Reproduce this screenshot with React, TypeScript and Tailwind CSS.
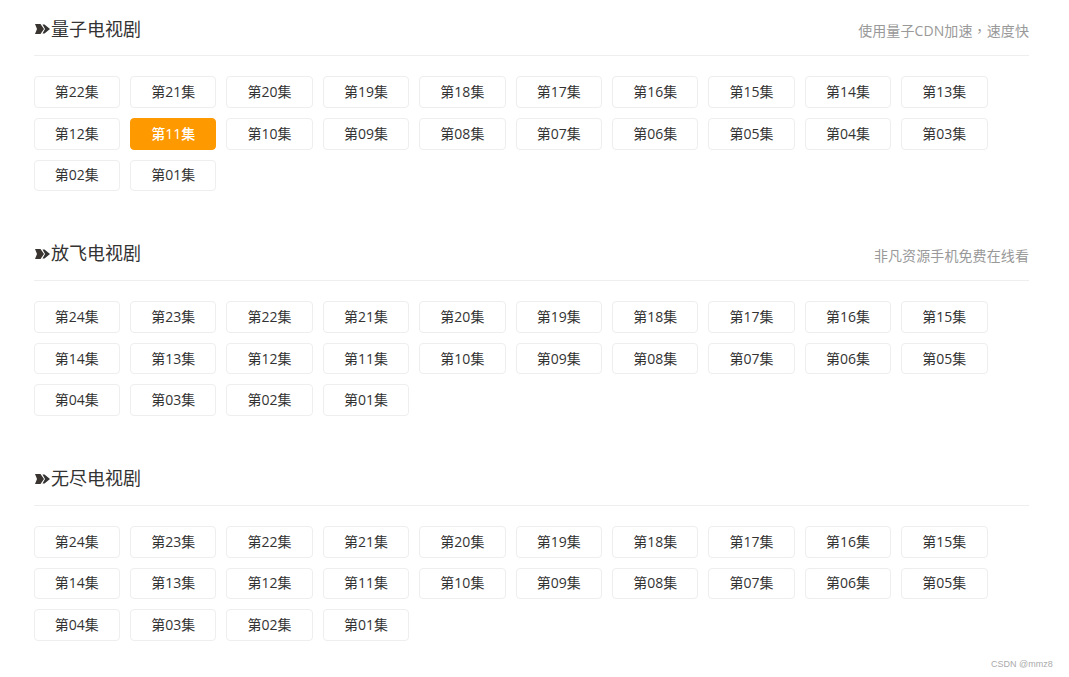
import React from 'react';

interface Section {
  title: string;
  note: React.ReactNode;
  count: number;
  active?: number;
}

const sections: Section[] = [
  {
    title: '量子电视剧',
    note: (
      <>
        使用量子CDN加速<span className="font-['Noto_Sans_CJK_TC']">，</span>速度快
      </>
    ),
    count: 22,
    active: 11,
  },
  { title: '放飞电视剧', note: '非凡资源手机免费在线看', count: 24 },
  { title: '无尽电视剧', note: '', count: 24 },
];

const Arrows = () => (
  <svg width="17" height="10" viewBox="0 0 17 10" className="shrink-0">
    <path d="M1 0H6.5L10 5L6.5 10H1L3 5Z" fill="#3a3530" />
    <path d="M8.5 0.5H10.5L16 5L10.5 9.5H8.5L11 5Z" fill="#333" />
  </svg>
);

const EpisodeList: React.FC<Section> = ({ title, note, count, active }) => {
  const episodes = Array.from({ length: count }, (_, i) => count - i);

  return (
    <section className="h-[224.83px]">
      <div className="flex items-center justify-between h-[56px] border-b border-[#eeeeee]">
        <h3 className="flex items-center text-[18px] font-normal text-[#333333] mt-[3px]">
          <Arrows />
          {title}
        </h3>
        <span className="text-[14px] text-[#999999] mt-[6px] tracking-[0.1px]">{note}</span>
      </div>
      <div className="grid grid-cols-[repeat(10,86.4px)] gap-x-[10px] gap-y-[10px] mt-[20.3px] -ml-[0.4px]">
        {episodes.map((n) => (
          <a
            key={n}
            className={
              n === active
                ? 'flex items-center justify-center h-[31.67px] pb-[1px] rounded-[4px] border border-[#ff9900] bg-[#ff9900] text-[14px] font-medium text-white'
                : 'flex items-center justify-center h-[31.67px] pb-[1px] rounded-[4px] border border-[#eeeeee] bg-white text-[14px] text-[#333333]'
            }
          >
            第{String(n).padStart(2, '0')}集
          </a>
        ))}
      </div>
    </section>
  );
};

const App: React.FC = () => {
  return (
    <div
      className="relative h-[677px] w-[1069px] overflow-hidden bg-white"
      style={{ fontFamily: '"Open Sans", "Noto Sans CJK SC", sans-serif' }}
    >
      <div className="ml-[34px] w-[995px]">
        {sections.map((s) => (
          <EpisodeList key={s.title} {...s} />
        ))}
      </div>
      <span className="absolute left-[991px] top-[658px] text-[9px] text-[#aaaaaa]" style={{ fontFamily: '"Liberation Sans", sans-serif' }}>
        CSDN @mmz8
      </span>
    </div>
  );
};

export default App;
